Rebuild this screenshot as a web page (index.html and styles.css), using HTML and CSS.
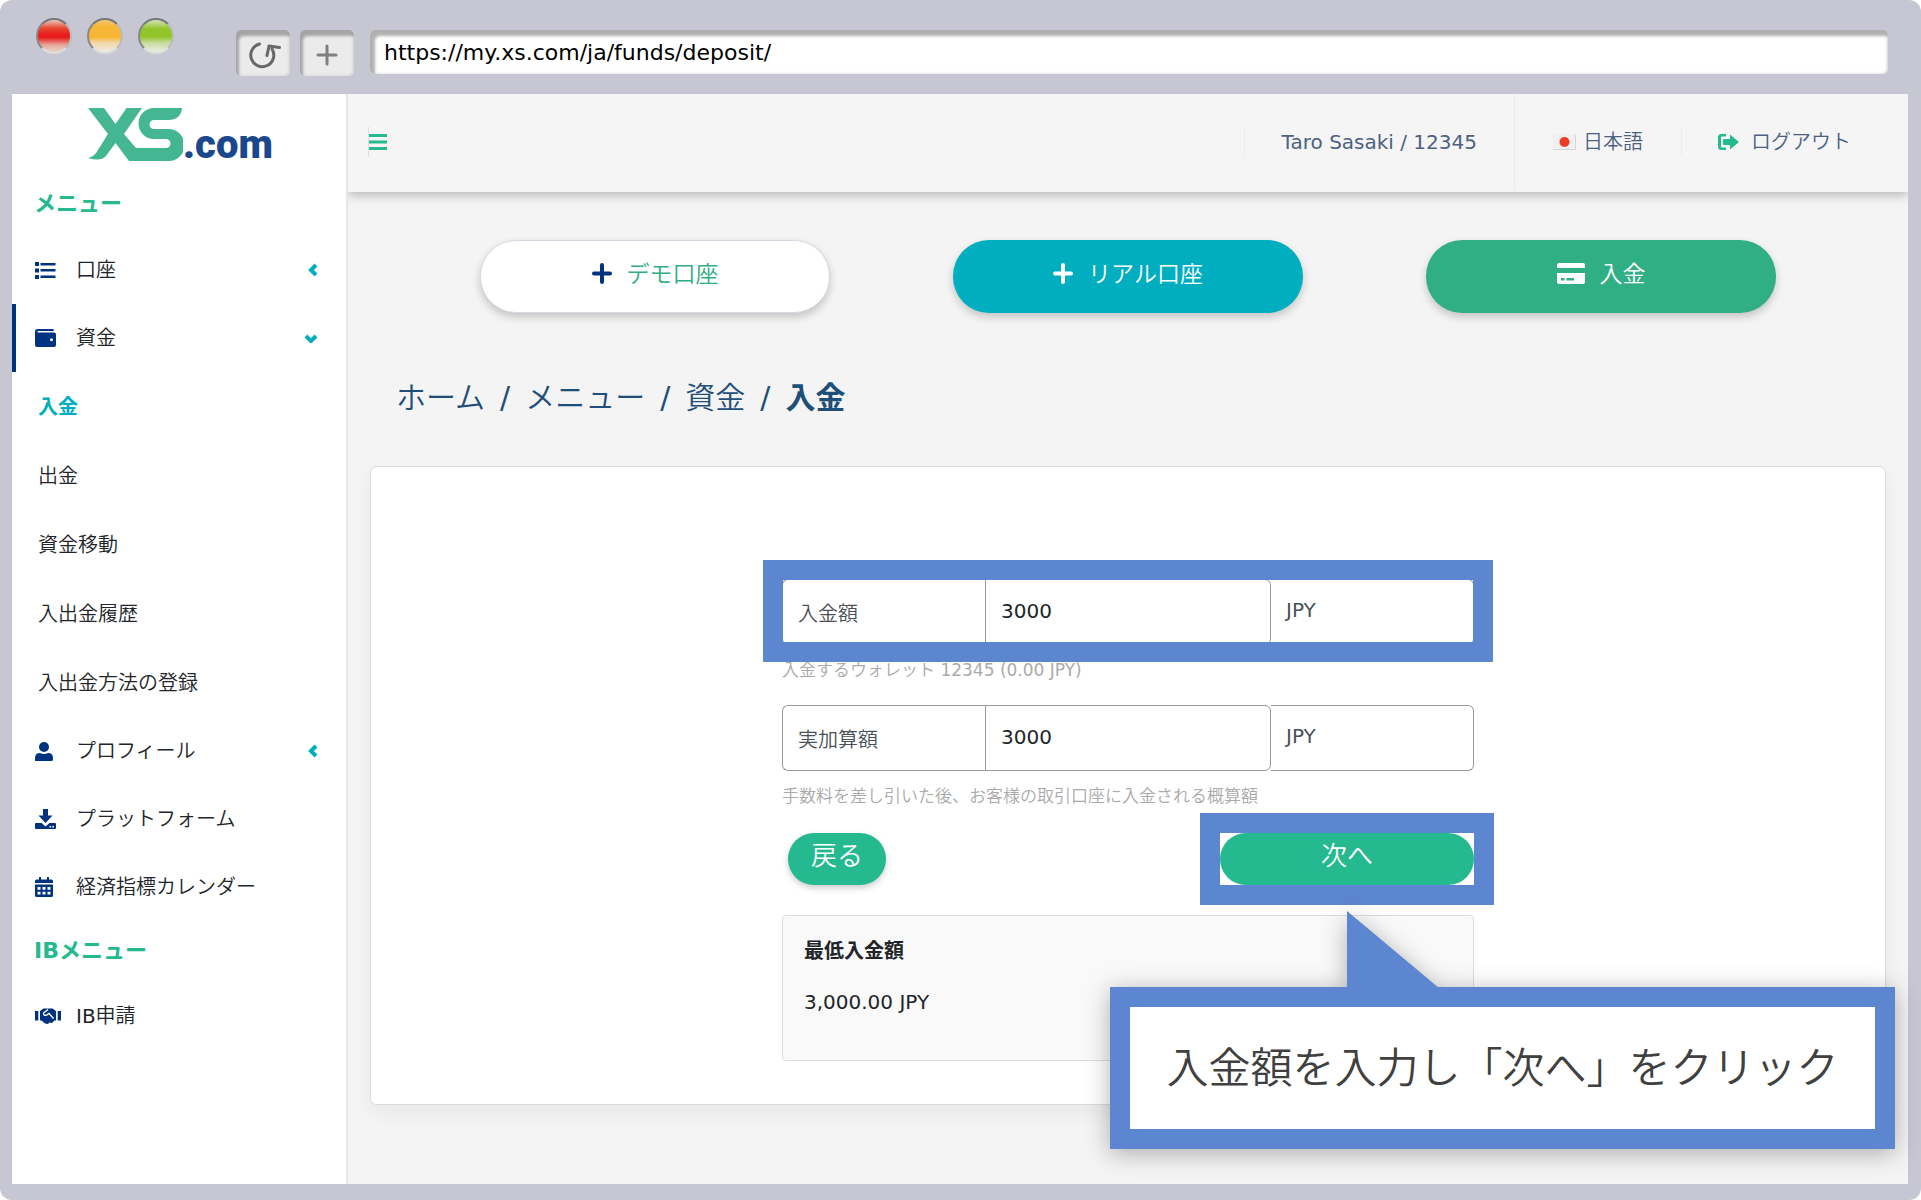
FILE: index.html
```html
<!DOCTYPE html>
<html lang="ja">
<head>
<meta charset="utf-8">
<title>入金 | XS.com</title>
<link rel="stylesheet" href="styles.css">
</head>
<body>
<div class="window">
  <div class="titlebar">
    <div class="lights">
      <span class="light light-red"></span>
      <span class="light light-amber"></span>
      <span class="light light-green"></span>
    </div>
    <div class="tools">
      <button class="tool" aria-label="再読み込み">
        <svg width="36" height="28" viewBox="0 0 36 28" fill="none" stroke="#66696b" stroke-width="3"><path d="M14.500 3A11.500 11.500 0 1 0 27 8" stroke-linecap="round"/><path d="M22 14.500L24 5L34.500 6.500" stroke-linecap="round" stroke-linejoin="round"/></svg>
      </button>
      <button class="tool" aria-label="新しいタブ">
        <svg width="22" height="22" viewBox="0 0 22 22" stroke="#7d7f81" stroke-width="3" stroke-linecap="round"><path d="M11 2V20M2 11H20"/></svg>
      </button>
    </div>
    <input class="address" type="text" value="https://my.xs.com/ja/funds/deposit/" aria-label="アドレス">
  </div>

  <div class="page">
    <aside class="sidebar">
      <a class="logo" href="#" aria-label="XS.com">
        <svg width="95" height="53" viewBox="0 0 95 53" fill="#45b692"><path d="M0 0H16L27.500 16L38.500 0H54L36 26L48 40H78A4.500 4.500 0 0 0 78 31H66A15.500 15.500 0 0 1 66 0H94Q93 12 80 12H66A4.500 4.500 0 0 0 66 21H79A15.500 15.500 0 0 1 82 53H41L27.500 35L18 48Q13 54 0 50Q5 49 8 45L20 26Z"/></svg>
        <span class="logo-text">.com</span>
      </a>
      <h2 class="group">メニュー</h2>
      <ul class="menu">
        <li><a class="item" href="#"><span class="icon"><svg width="21" height="17" viewBox="0 0 21 17" fill="#00337f"><path d="M0 0h4v4H0zM0 6.500h4v4H0zM0 13h4v4H0zM5.500 1h15v2.500h-15zM5.500 7h15v2.500h-15zM5.500 13.500h15V16h-15z"/></svg></span>口座<svg class="chev" width="10" height="14" viewBox="0 0 10 14"><path d="M8 2L3 7L8 12"/></svg></a></li>
        <li>
          <a class="item open" href="#"><span class="icon"><svg width="21" height="18" viewBox="0 0 21 18" fill="#00337f"><path fill-rule="evenodd" d="M2.500 0H17.500Q19 0 19 2H3Q2.400 2 2.400 2.800T3 3.600H19Q21 3.600 21 5.600V16Q21 18 19 18H2Q0 18 0 16V2.500Q0 0 2.500 0ZM16.500 9.200a1.500 1.500 0 1 0 .01 0Z"/></svg></span>資金<svg class="chev" width="14" height="10" viewBox="0 0 14 10"><path d="M2 3L7 8L12 3"/></svg></a>
          <ul class="submenu">
            <li><a class="current" href="#">入金</a></li>
            <li><a href="#">出金</a></li>
            <li><a href="#">資金移動</a></li>
            <li><a href="#">入出金履歴</a></li>
            <li><a href="#">入出金方法の登録</a></li>
          </ul>
        </li>
        <li><a class="item" href="#"><span class="icon"><svg width="18" height="19" viewBox="0 0 18 19" fill="#00337f"><circle cx="9" cy="5" r="5"/><path d="M0 19V16Q0 11 5 11Q9 13 13 11Q18 11 18 16V17.500Q18 19 16.500 19Z"/></svg></span>プロフィール<svg class="chev" width="10" height="14" viewBox="0 0 10 14"><path d="M8 2L3 7L8 12"/></svg></a></li>
        <li><a class="item" href="#"><span class="icon"><svg width="21" height="20" viewBox="0 0 21 20" fill="#00337f"><path d="M8 0H13V6.500H17.500L10.500 14L3.500 6.500H8Z"/><path fill-rule="evenodd" d="M1 14H6.500L10.500 17.500L14.500 14H20Q21 14 21 15V19Q21 20 20 20H1Q0 20 0 19V15Q0 14 1 14ZM14.500 17v1.600h1.600V17ZM17.300 17v1.600h1.600V17Z"/></svg></span>プラットフォーム</a></li>
        <li><a class="item" href="#"><span class="icon"><svg width="18" height="20" viewBox="0 0 18 20" fill="#00337f"><path fill-rule="evenodd" d="M4 0H6V2.500H12V0H14V2.500H16.500Q18 2.500 18 4V6H0V4Q0 2.500 1.500 2.500H4ZM0 7.500H18V18.500Q18 20 16.500 20H1.500Q0 20 0 18.500ZM2.500 10v2.800H5.500V10ZM7.500 10v2.800h3V10ZM12.500 10v2.800h3V10ZM2.500 14.800v2.800H5.500V14.800ZM7.500 14.800v2.800h3V14.800ZM12.500 14.800v2.800h3V14.800Z"/></svg></span>経済指標カレンダー</a></li>
      </ul>
      <h2 class="group group-ib">IBメニュー</h2>
      <ul class="menu">
        <li><a class="item" href="#"><span class="icon"><svg width="26" height="16" viewBox="0 0 26 16" fill="#00337f"><path d="M0 3H3.300V12.500H0ZM22.700 3H26V12.500H22.700Z"/><path d="M5 3L8.500 .5H17.500L21 3V12.500H19.500L17 15L14.500 14.500L13 16L10 15.500L6.500 12.500H5Z"/><path d="M13 1.500L8.500 5Q8.500 8.500 12 6.800L14 5.500L18.500 10.500" fill="none" stroke="#fff" stroke-width="1.400"/></svg></span>IB申請</a></li>
      </ul>
    </aside>

    <main class="main">
      <header class="topbar">
        <button class="burger" aria-label="メニューを開閉"><svg width="18" height="16" viewBox="0 0 18 16" fill="#25b98f"><path d="M0 0h18v3H0zM0 6.500h18v3H0zM0 13h18v3H0z"/></svg></button>
        <span class="user">Taro Sasaki / 12345</span>
        <a class="lang" href="#"><svg width="23" height="16" viewBox="0 0 23 16"><path d="M0 0H23V16H0Z" fill="#f1f0f0"/><path d="M0 15H22V1H23V16H0Z" fill="#d6d6d6"/><circle cx="11.500" cy="8" r="5" fill="#ee3b25"/></svg>日本語</a>
        <a class="logout" href="#"><svg width="21" height="16" viewBox="0 0 21 16" fill="#25b98f"><path d="M8 0V2.500H4Q3 2.500 3 3.500V12.500Q3 13.500 4 13.500H8V16H3.500Q0 16 0 12.500V3.500Q0 0 3.500 0Z"/><path d="M6 5H12V.5L21 8L12 15.500V11H6Q5 11 5 10V6Q5 5 6 5Z"/></svg>ログアウト</a>
      </header>

      <div class="actions">
        <button class="pill pill-demo"><svg width="20" height="21" viewBox="0 0 20 21" stroke="#00337f" stroke-width="4" stroke-linecap="round"><path d="M10 2V19M2 10.500H18"/></svg>デモ口座</button>
        <button class="pill pill-real"><svg width="20" height="21" viewBox="0 0 20 21" stroke="#fff" stroke-width="4" stroke-linecap="round"><path d="M10 2V19M2 10.500H18"/></svg>リアル口座</button>
        <button class="pill pill-deposit"><svg width="28" height="21" viewBox="0 0 28 21" fill="#fff"><path d="M2 0H26Q28 0 28 2V5H0V2Q0 0 2 0Z"/><path fill-rule="evenodd" d="M0 10H28V19Q28 21 26 21H2Q0 21 0 19ZM4 15v2.500H7.500V15ZM9.500 15v2.500H17V15Z"/></svg>入金</button>
      </div>

      <nav class="crumbs" aria-label="パンくず">
        <a href="#">ホーム</a><span>/</span><a href="#">メニュー</a><span>/</span><a href="#">資金</a><span>/</span><strong>入金</strong>
      </nav>

      <section class="card">
        <form class="form">
          <div class="row">
            <label class="cell name" for="amount">入金額</label>
            <input class="cell value" id="amount" type="text" value="3000">
            <span class="cell unit">JPY</span>
            <span class="frame frame-row"></span>
          </div>
          <p class="hint">入金するウォレット 12345 (0.00 JPY)</p>
          <div class="row">
            <label class="cell name" for="net">実加算額</label>
            <input class="cell value" id="net" type="text" value="3000">
            <span class="cell unit">JPY</span>
          </div>
          <p class="hint">手数料を差し引いた後、お客様の取引口座に入金される概算額</p>
          <div class="buttons">
            <button class="back" type="button">戻る</button>
            <div class="next-wrap">
              <button class="next" type="button">次へ</button>
              <span class="frame frame-next"></span>
              <div class="callout">
                <svg class="pointer" width="92" height="77" viewBox="0 0 92 77" fill="#5c86cf"><path d="M0 0L92 77H0Z"/></svg>
                <p class="callout-text">入金額を入力し「次へ」をクリック</p>
              </div>
            </div>
          </div>
          <div class="minimum">
            <h3>最低入金額</h3>
            <p>3,000.00 JPY</p>
          </div>
        </form>
      </section>
    </main>
  </div>
</div>
</body>
</html>
```
FILE: styles.css
```css
* { box-sizing: border-box; }

body {
  margin: 0;
  background: #fff;
  font-family: "DejaVu Sans", "Noto Sans CJK JP DemiLight", "Noto Sans CJK JP", sans-serif;
  font-size: 20px;
  line-height: 28px;
  color: #212529;
}

h2, h3, p, ul { margin: 0; padding: 0; }
ul { list-style: none; }
a { color: inherit; text-decoration: none; }
button, input { font: inherit; color: inherit; margin: 0; }
button { border: 0; padding: 0; cursor: pointer; }
svg { display: block; flex: none; }
h2, h3, strong, .current { font-family: "DejaVu Sans", "Noto Sans CJK JP", sans-serif; font-weight: 700; }

.window {
  display: flex;
  flex-direction: column;
  min-height: 100vh;
  padding: 0 13px 16px 12px;
  border-radius: 12px;
  background: #c7c7d3;
}

/* Browser chrome */
.titlebar {
  display: flex;
  align-items: flex-start;
  height: 94px;
  padding: 18px 20px 0 24px;
}

.lights { display: flex; gap: 15px; width: 200px; }
.light {
  width: 36px;
  height: 36px;
  border: 2px solid;
  border-color: #777 #bbb #ddd #888;
  border-radius: 50%;
}
.light-red { background: linear-gradient(#e9c9bb 0%, #e94a34 25%, #e81d1d 45%, #e81d1d 55%, #e8a89b 78%, #ead6cb 100%); }
.light-amber { background: linear-gradient(#f3c673 0%, #f8b637 20%, #f8b637 55%, #f2d6a6 70%, #eeebe6 100%); }
.light-green { background: linear-gradient(#d3e3b5 0%, #92c52a 28%, #92c52a 52%, #c9dca4 72%, #e9eee2 100%); }

.tools { display: flex; gap: 10px; margin: 12px 16px 0 0; }
.tool {
  display: flex;
  align-items: center;
  justify-content: center;
  width: 54px;
  height: 46px;
  padding: 4px 0 0;
  border-radius: 5px;
  background: #ebebeb;
  box-shadow: inset 3px 6px 3px #a5a5a7, inset -1px 0 3px #ccc;
}
.address {
  flex: 1;
  height: 44px;
  margin-top: 12px;
  padding: 0 14px;
  border: 0;
  border-radius: 5px;
  background: #fff;
  box-shadow: inset 5px 6px 3px #b1b1b1, inset -1px 0 3px #ccc;
  color: #000;
  font-size: 22px;
}

.page { display: flex; flex: 1; }

/* Sidebar */
.sidebar {
  width: 336px;
  flex: none;
  padding-top: 13px;
  border-right: 2px solid #e6e6e6;
  background: #fff;
}
.logo {
  display: flex;
  align-items: flex-end;
  height: 54px;
  padding-left: 76px;
}
.logo-text {
  font-family: Roboto, "Open Sans", sans-serif;
  font-weight: 900;
  font-size: 40px;
  line-height: 32px;
  color: #1b478c;
}
.group {
  padding: 0 22px;
  margin: 29px 0 18px;
  font-size: 22px;
  line-height: 28px;
  color: #25b98f;
}
.group-ib { margin: 16px 0 17px; }
.item {
  display: flex;
  align-items: center;
  height: 68px;
  padding: 0 28px 0 19px;
  border-left: 4px solid transparent;
}
.item.open { border-color: #00337f; }
.icon { width: 41px; }
.chev {
  margin-left: auto;
  fill: none;
  stroke: #00aec0;
  stroke-width: 4;
}
.submenu a {
  display: flex;
  align-items: center;
  height: 69px;
  padding-left: 26px;
}
.submenu .current { color: #00aec0; }

/* Main column */
.main {
  flex: 1;
  min-width: 0;
  background: #f4f4f4;
}
.topbar {
  display: flex;
  align-items: center;
  height: 98px;
  padding: 0 57px 2px 20px;
  background: #f5f5f5;
  box-shadow: 0 3px 10px rgba(0, 0, 0, .26);
  clip-path: inset(0 0 -20px 0);
  color: #4d6180;
}
.burger {
  height: 30px;
  margin-right: auto;
  border-left: 1px solid #ddd;
  background: none;
}
.user { padding: 0 37px; border-left: 1px solid #ececec; line-height: 30px; }
.lang {
  display: flex;
  align-items: center;
  gap: 7px;
  height: 98px;
  padding: 0 38px;
  border-left: 1px solid #ececec;
}
.logout {
  display: flex;
  align-items: center;
  gap: 12px;
  padding-left: 36px;
  border-left: 1px solid #ececec;
}

.actions {
  display: grid;
  grid-template-columns: repeat(3, 350px);
  justify-content: space-between;
  padding: 48px 132px 0 132px;
}
.pill {
  display: flex;
  align-items: center;
  justify-content: center;
  gap: 15px;
  height: 73px;
  padding-bottom: 6px;
  border-radius: 36px;
  font-size: 23px;
  color: #fff;
  box-shadow: 0 4px 8px rgba(0, 0, 0, .2);
}
.pill-demo { background: #fff; border: 1px solid #d6d9e3; color: #2fae83; }
.pill-real { background: #00aec0; }
.pill-deposit { background: #30af84; }

.crumbs {
  display: flex;
  gap: 15px;
  padding: 63px 48px 46px;
  font-size: 30px;
  line-height: 44px;
  color: #1f4e79;
}

.card {
  margin: 0 22px 60px;
  padding: 112px 0 43px;
  border: 1px solid #dadce1;
  border-radius: 6px;
  background: #fff;
  box-shadow: 0 8px 20px rgba(0, 0, 0, .05);
}
.form { width: 692px; margin: 0 auto; }

.row { position: relative; display: flex; height: 66px; }
.cell {
  border: 1px solid #999;
  padding: 0 15px;
  color: #495057;
}
.name {
  width: 203px;
  padding-top: 20px;
  border-right: 0;
  border-radius: 6px 0 0 6px;
}
.value {
  width: 286px;
  padding-bottom: 3px;
  border-radius: 0 6px 6px 0;
  color: #212529;
}
.unit {
  flex: 1;
  padding-top: 16px;
  border-left: 0;
  border-radius: 0 6px 6px 0;
}
.hint {
  height: 60px;
  padding-top: 11px;
  font-size: 17px;
  line-height: 28px;
  color: #aaa;
}

/* Highlight frames drawn over the form */
.frame {
  position: absolute;
  border: 20px solid #5c86cf;
  pointer-events: none;
}
.frame-row { inset: -19px -19px -17px; }
.frame-next { inset: -20px; }

.buttons { display: flex; justify-content: space-between; padding: 2px 0 30px 6px; }
.back, .next {
  height: 52px;
  padding-bottom: 7px;
  border-radius: 26px;
  background: #25b98f;
  color: #fff;
  font-size: 26px;
}
.back { width: 98px; box-shadow: 0 3px 6px rgba(0, 0, 0, .2); }
.next-wrap { position: relative; width: 254px; }
.next { width: 100%; }

.callout {
  position: absolute;
  z-index: 2;
  top: 154px;
  right: -421px;
  width: 785px;
  border: 20px solid #5c86cf;
  background: #fff;
  filter: drop-shadow(0 4px 12px rgba(0, 0, 0, .3));
}
.pointer { position: absolute; left: 217px; bottom: 100%; margin-bottom: 19px; }
.callout-text {
  padding: 33px 0 31px;
  font-size: 42px;
  line-height: 58px;
  text-align: center;
  white-space: nowrap;
  color: #404040;
}

.minimum {
  height: 146px;
  padding: 21px;
  border: 1px solid #dcdcdc;
  border-radius: 4px;
  background: #f9f9f9;
}
.minimum h3 { margin-bottom: 23px; font-size: 20px; line-height: 28px; }
```
